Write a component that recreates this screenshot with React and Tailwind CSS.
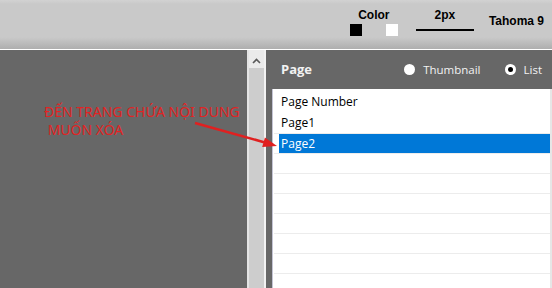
import React from 'react';

const rows = ['', '', '', '', '', '', ''];

const Radio = ({ checked, label }) => (
  <div className="flex items-center gap-[8px]">
    <span className="w-[11px] h-[11px] rounded-full bg-white flex items-center justify-center">
      {checked && <span className="w-[5px] h-[5px] rounded-full bg-black" />}
    </span>
    <span className="text-[11.5px] leading-[16px] text-[#f2f2f2]">{label}</span>
  </div>
);

const App = () => {
  return (
    <div className="relative w-[552px] h-[288px] overflow-hidden flex flex-col font-['Open_Sans',sans-serif] bg-[#676767]">
      {/* toolbar */}
      <div className="h-[50px] shrink-0 border-b border-white bg-[linear-gradient(to_bottom,#d2d2d2_0%,#c9c9c9_8%,#c9c9c9_76%,#aeaeae_100%)] flex justify-end items-start pr-[8px] font-['Liberation_Sans',sans-serif] font-bold text-[12px] leading-[14px] text-black">
        <div className="flex flex-col items-center mt-[8px]">
          <span>Color</span>
          <div className="flex gap-[24px] mt-[2px]">
            <span className="w-[12px] h-[12px] bg-black" />
            <span className="w-[12px] h-[12px] bg-white" />
          </div>
        </div>
        <div className="flex flex-col items-center mt-[8px] ml-[18px]">
          <span>2px</span>
          <span className="w-[58px] h-[2px] bg-black mt-[7px]" />
        </div>
        <span className="mt-[14px] ml-[15px]">Tahoma 9</span>
      </div>

      {/* body */}
      <div className="flex-1 flex min-h-0">
        <div className="w-[247px] bg-[#676767]" />
        <div className="w-[19px] border-l-2 border-r-2 border-l-[#e4e4e4] border-r-[#f2f2f2] bg-[#cdcdcd] flex flex-col">
          <div className="h-[18px] bg-[#ebebeb] flex justify-center pt-[8px]">
            <svg width="9" height="6" viewBox="0 0 9 6">
              <polyline points="1,5 4.5,1.5 8,5" fill="none" stroke="#5a5a5a" strokeWidth="1.6" />
            </svg>
          </div>
        </div>
        <div className="flex-1 flex flex-col bg-[#676767]">
          <div className="h-[39px] shrink-0 flex items-center justify-between pl-[15px] pr-[10px]">
            <span className="text-[13px] font-bold text-[#f2f2f2]">Page</span>
            <div className="flex items-center gap-[24px]">
              <Radio label="Thumbnail" />
              <Radio checked label="List" />
            </div>
          </div>
          <div className="flex-1 flex ml-[6px] bg-white border-l border-[#c4c4d4] text-[12px] text-black">
            <div className="flex-1 flex flex-col pl-[1px]">
              <div className="h-[24px] flex items-center pl-[7px] pt-[2px]">Page Number</div>
              <div className="h-[20px] flex items-center pl-[7px]">Page1</div>
              <div className="h-[20px] border-t border-[#ececec] flex pl-[5px]">
                <div className="flex-1 bg-[#0078d7] text-white flex items-center pl-[2px]">Page2</div>
              </div>
              {rows.map((r, i) => (
                <div key={i} className="h-[20px] shrink-0 border-t border-[#ececec]" />
              ))}
            </div>
            <div className="w-[2px] bg-[#e6e6e6]" />
          </div>
        </div>
      </div>

      {/* annotation */}
      <div className="absolute left-[44px] top-[103px] whitespace-pre font-['Noto_Sans',sans-serif] text-[14px] leading-[18px] text-[#e02424]">
        {'ĐẾN TRANG CHỨA NỘI DUNG\n MUỐN XÓA'}
      </div>
      <svg className="absolute left-0 top-0 pointer-events-none" width="552" height="288">
        <line x1="195" y1="123" x2="264" y2="142.2" stroke="#e02020" strokeWidth="2.5" />
        <polygon points="277,146 262.2,147 264.9,137.4" fill="#e02020" />
      </svg>
    </div>
  );
};

export default App;
